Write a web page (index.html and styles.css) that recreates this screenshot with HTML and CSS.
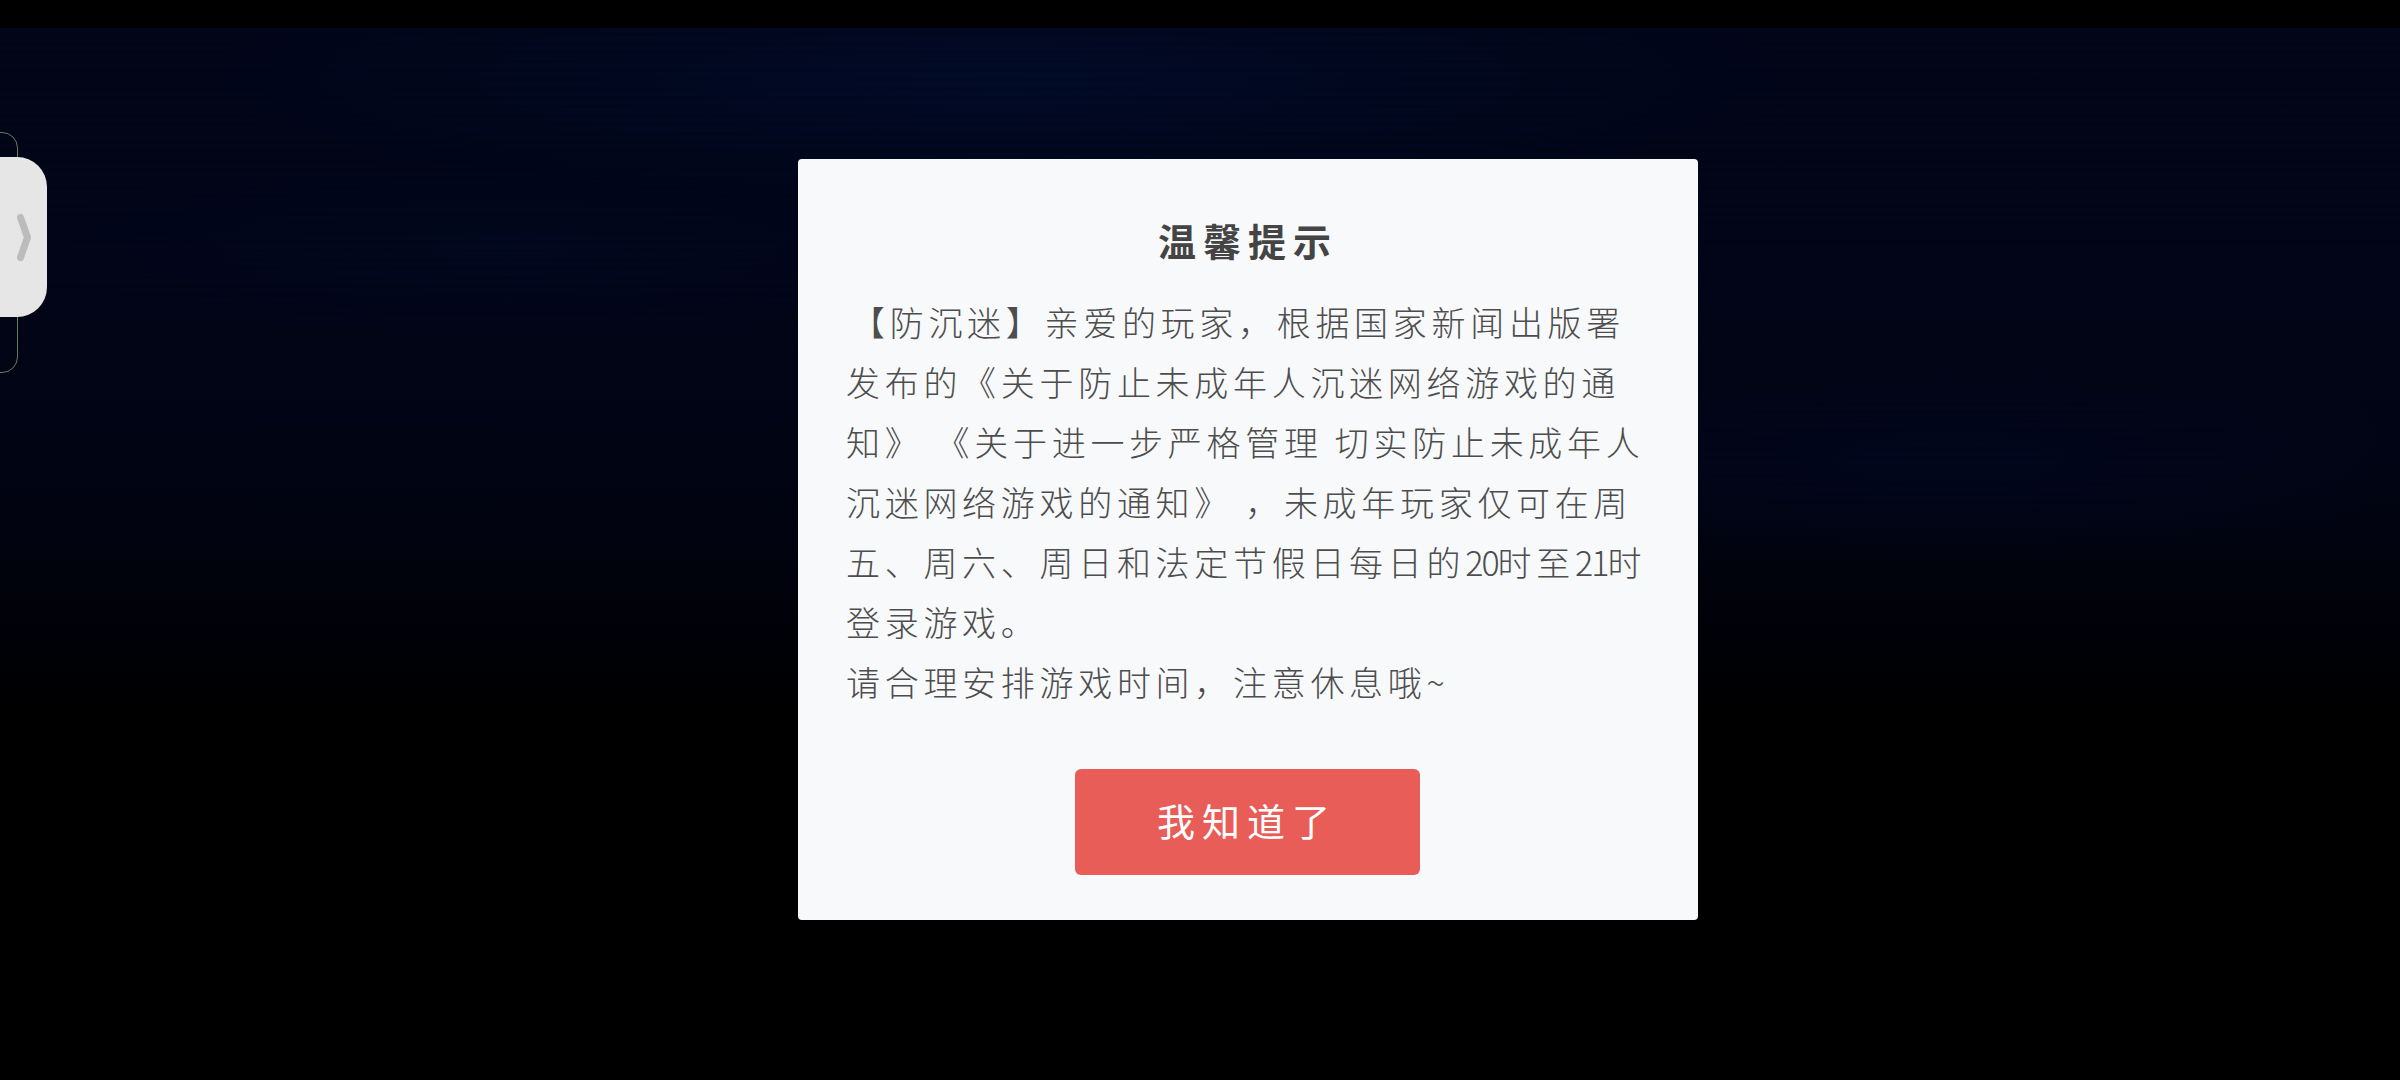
FILE: index.html
```html
<!DOCTYPE html>
<html lang="zh-CN">
<head>
    <meta charset="UTF-8">
    <title>温馨提示</title>
    <link rel="stylesheet" href="styles.css">
</head>
<body>
    <div class="top-bar"></div>
    <div class="stage">
        <div class="notice">
            <h1 class="notice-title">温馨提示</h1>
            <p class="notice-text notice-first">【防沉迷】亲爱的玩家，根据国家新闻出版署<br>发布的《关于防止未成年人沉迷网络游戏的通<br>知》 《关于进一步严格管理 切实防止未成年人<br>沉迷网络游戏的通知》 ，未成年玩家仅可在周<br>五、周六、周日和法定节假日每日的<span class="digits">20</span>时至<span class="digits">21</span>时<br>登录游戏。</p>
            <p class="notice-text">请合理安排游戏时间，注意休息哦~</p>
            <button class="notice-btn">我知道了</button>
        </div>
    </div>

    <!-- side drawer handle -->
    <div class="drawer-outline"></div>
    <div class="drawer-handle">
        <svg class="drawer-arrow" viewBox="0 0 14 47">
            <path d="M3.5 3.5 L10.5 23.5 L3.5 43.5" fill="none" stroke="#bcbcbc" stroke-width="7" stroke-linecap="round" stroke-linejoin="round"/>
        </svg>
    </div>
</body>
</html>
```

FILE: styles.css
```css
html, body {
    margin: 0;
    height: 100%;
}
body {
    width: 2400px;
    height: 1080px;
    overflow: hidden;
    font-family: "Noto Sans CJK SC", "Noto Sans", sans-serif;
    background-color: #000;
    background-image:
        repeating-linear-gradient(0deg, rgba(0,0,0,0.12) 0, rgba(0,0,0,0.12) 3px, rgba(0,0,0,0) 3px, rgba(0,0,0,0) 9px),
        radial-gradient(ellipse 800px 130px at 1000px 80px, rgba(1,12,46,0.7), rgba(1,12,46,0)),
        radial-gradient(ellipse 500px 90px at 500px 250px, rgba(1,10,38,0.5), rgba(1,10,38,0)),
        radial-gradient(ellipse 500px 100px at 1950px 460px, rgba(1,10,38,0.55), rgba(1,10,38,0)),
        linear-gradient(180deg, #010619 0, #010517 300px, #010311 520px, #000 720px);
}
.top-bar {
    height: 28px;
    background-color: #000;
}
.stage {
    display: flex;
    justify-content: center;
    padding: 131px 0 0 96px;
}
.notice {
    box-sizing: border-box;
    width: 900px;
    height: 761px;
    padding: 52px 30px 0 48px;
    background-color: #f8f9fb;
    border-radius: 4px;
    color: #4d4d4d;
}
.notice-title {
    margin: 0 0 23px;
    font-size: 38px;
    line-height: 58px;
    font-weight: 700;
    letter-spacing: 7px;
    text-align: center;
    color: #444;
    transform: translateX(-9px);
}
.notice-text {
    margin: 0;
    font-size: 34px;
    line-height: 60px;
    letter-spacing: 4.7px;
    white-space: nowrap;
    font-weight: 300;
}
.notice-first {
    text-indent: 5px;
}
.digits {
    letter-spacing: -2px;
}
.notice-btn {
    display: block;
    width: 345px;
    height: 106px;
    margin: 57px auto 0;
    padding: 0 0 6px;
    position: relative;
    left: -10px;
    border: none;
    border-radius: 6px;
    background-color: #e95d58;
    color: #fff;
    font-family: inherit;
    font-size: 38px;
    letter-spacing: 7px;
}
.drawer-outline {
    position: absolute;
    left: -30px;
    top: 132px;
    width: 46px;
    height: 239px;
    border: 1px solid #5f7f62;
    border-radius: 16px;
}
.drawer-handle {
    position: absolute;
    left: 0;
    top: 157px;
    width: 47px;
    height: 160px;
    display: flex;
    align-items: center;
    background-color: #e6e6e6;
    border-radius: 0 30px 30px 0;
}
.drawer-arrow {
    width: 14px;
    height: 47px;
    margin-left: 17px;
}
```
